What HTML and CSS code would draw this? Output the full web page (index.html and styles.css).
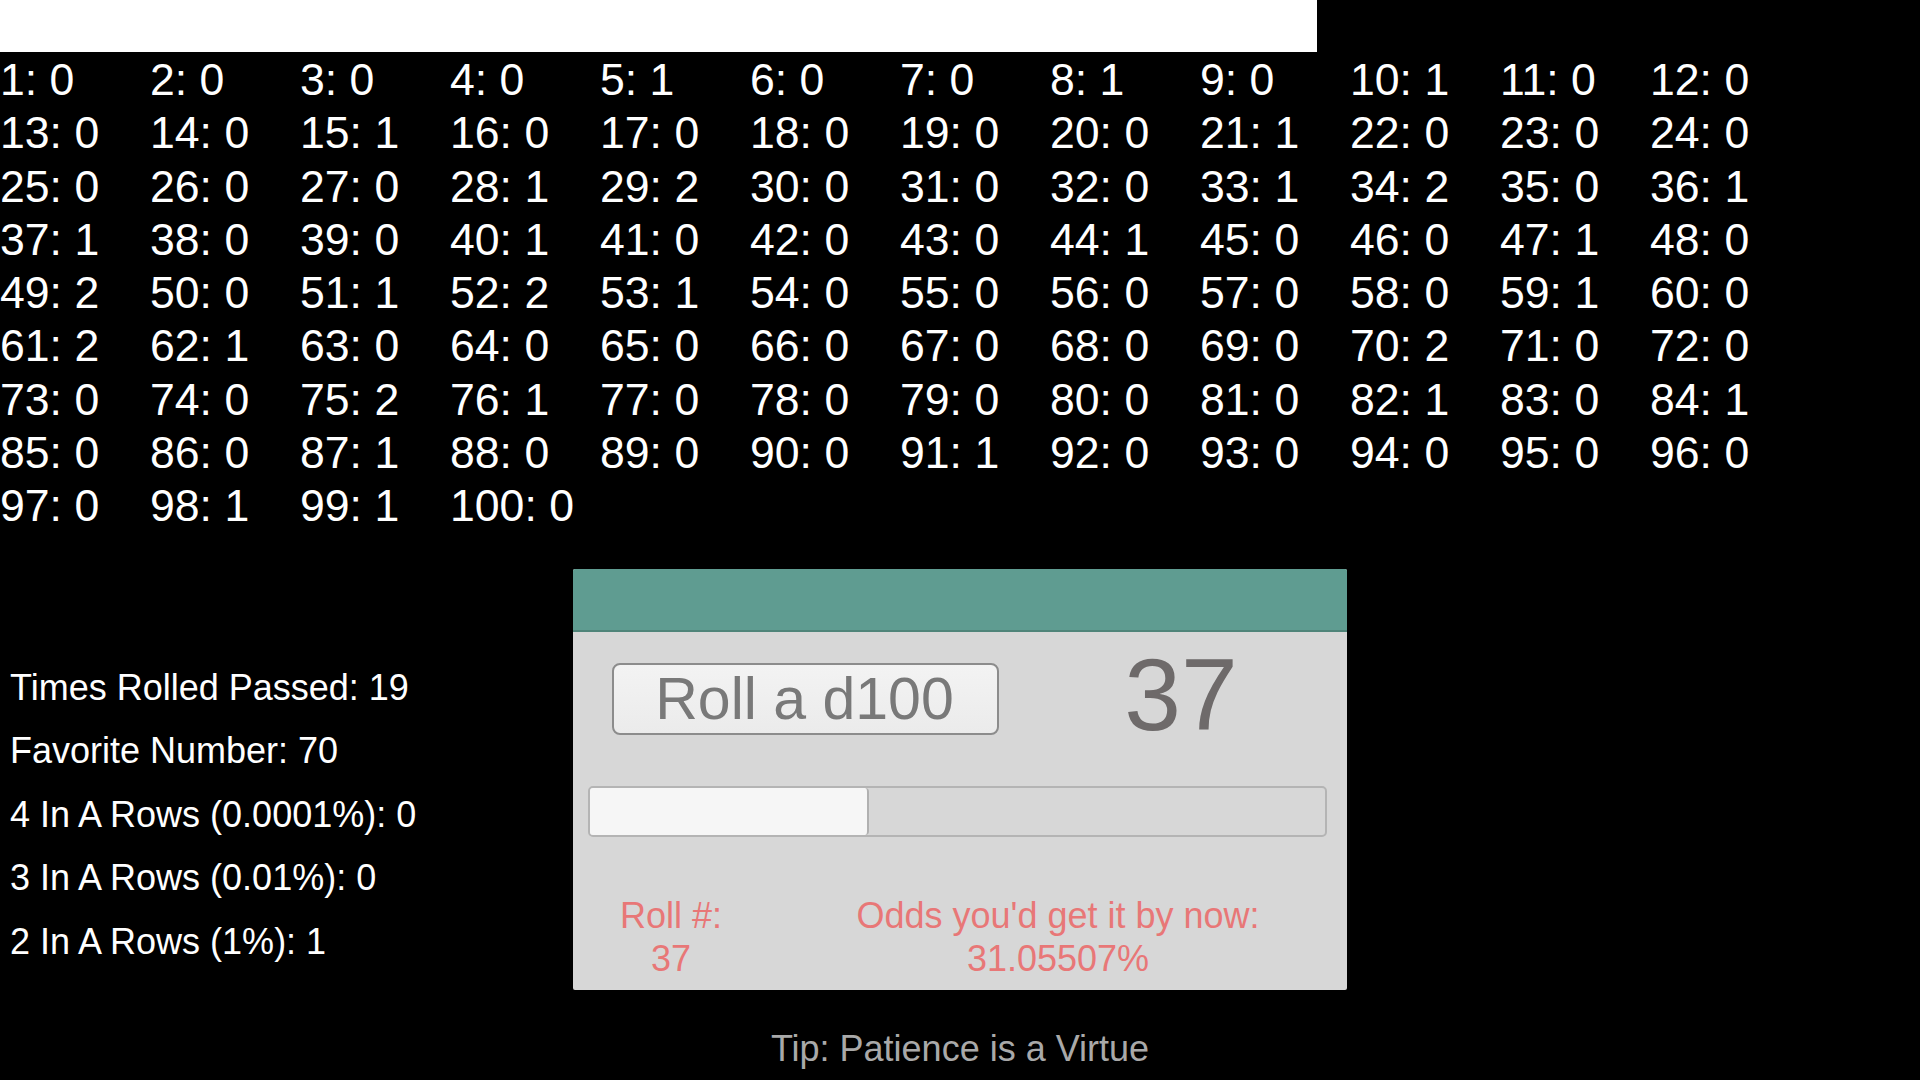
FILE: index.html
```html
<!DOCTYPE html>
<html>
<head>
<meta charset="utf-8">
<link rel="stylesheet" href="styles.css">
</head>
<body>
<div class="topbar"></div>
<div class="counts">
<span>1: 0</span><span>2: 0</span><span>3: 0</span><span>4: 0</span><span>5: 1</span><span>6: 0</span><span>7: 0</span><span>8: 1</span><span>9: 0</span><span>10: 1</span><span>11: 0</span><span>12: 0</span>
<span>13: 0</span><span>14: 0</span><span>15: 1</span><span>16: 0</span><span>17: 0</span><span>18: 0</span><span>19: 0</span><span>20: 0</span><span>21: 1</span><span>22: 0</span><span>23: 0</span><span>24: 0</span>
<span>25: 0</span><span>26: 0</span><span>27: 0</span><span>28: 1</span><span>29: 2</span><span>30: 0</span><span>31: 0</span><span>32: 0</span><span>33: 1</span><span>34: 2</span><span>35: 0</span><span>36: 1</span>
<span>37: 1</span><span>38: 0</span><span>39: 0</span><span>40: 1</span><span>41: 0</span><span>42: 0</span><span>43: 0</span><span>44: 1</span><span>45: 0</span><span>46: 0</span><span>47: 1</span><span>48: 0</span>
<span>49: 2</span><span>50: 0</span><span>51: 1</span><span>52: 2</span><span>53: 1</span><span>54: 0</span><span>55: 0</span><span>56: 0</span><span>57: 0</span><span>58: 0</span><span>59: 1</span><span>60: 0</span>
<span>61: 2</span><span>62: 1</span><span>63: 0</span><span>64: 0</span><span>65: 0</span><span>66: 0</span><span>67: 0</span><span>68: 0</span><span>69: 0</span><span>70: 2</span><span>71: 0</span><span>72: 0</span>
<span>73: 0</span><span>74: 0</span><span>75: 2</span><span>76: 1</span><span>77: 0</span><span>78: 0</span><span>79: 0</span><span>80: 0</span><span>81: 0</span><span>82: 1</span><span>83: 0</span><span>84: 1</span>
<span>85: 0</span><span>86: 0</span><span>87: 1</span><span>88: 0</span><span>89: 0</span><span>90: 0</span><span>91: 1</span><span>92: 0</span><span>93: 0</span><span>94: 0</span><span>95: 0</span><span>96: 0</span>
<span>97: 0</span><span>98: 1</span><span>99: 1</span><span>100: 0</span>
</div>
<div class="lower">
  <div class="stats">
    <div>Times Rolled Passed: 19</div>
    <div>Favorite Number: 70</div>
    <div>4 In A Rows (0.0001%): 0</div>
    <div>3 In A Rows (0.01%): 0</div>
    <div>2 In A Rows (1%): 1</div>
  </div>
  <div class="center">
    <div class="card">
      <div class="card-head"></div>
      <div class="card-body">
        <div class="roll-row">
          <button class="roll-btn">Roll a d100</button>
          <div class="result">37</div>
        </div>
        <div class="bar"><div class="bar-fill" style="width: 37.9%"></div></div>
        <div class="info">
          <div class="info-roll">Roll #:<br>37</div>
          <div class="info-odds">Odds you'd get it by now:<br>31.05507%</div>
        </div>
      </div>
    </div>
    <div class="tip">Tip: Patience is a Virtue</div>
  </div>
  <div class="spacer"></div>
</div>
</body>
</html>
```
FILE: styles.css
```css
html, body {
  margin: 0;
  padding: 0;
  background: #000;
  font-family: "Liberation Sans", Arial, sans-serif;
  color: #fff;
  width: 1920px;
  height: 1080px;
  overflow: hidden;
}
.topbar {
  width: 1317px;
  height: 52px;
  background: #fff;
}
.counts {
  display: grid;
  grid-template-columns: repeat(12, 150px);
  font-size: 44.6px;
  line-height: 53.3px;
  white-space: nowrap;
  padding-top: 1px;
}
.lower {
  display: grid;
  grid-template-columns: 573px 774px 1fr;
  margin-top: 36px;
}
.stats {
  padding-top: 87px;
  padding-left: 10px;
  font-size: 36px;
  line-height: 63.6px;
  white-space: nowrap;
}
.card {
  width: 774px;
  height: 421px;
  background: #d7d7d7;
  border-radius: 2px;
  overflow: hidden;
  display: flex;
  flex-direction: column;
}
.card-head {
  flex-shrink: 0;
  height: 61px;
  background: #5f9c91;
  border-bottom: 2px solid #4f8479;
}
.card-body {
  flex: 1;
  display: flex;
  flex-direction: column;
}
.roll-row {
  display: flex;
  align-items: flex-start;
  padding-top: 31px;
  padding-left: 39px;
  height: 72px;
}
.roll-btn {
  flex-shrink: 0;
  width: 387px;
  height: 72px;
  box-sizing: border-box;
  border: 2px solid #8c8c8c;
  border-radius: 8px;
  background: linear-gradient(#f3f3f3, #ebebeb);
  color: #797979;
  font-family: "Liberation Sans", Arial, sans-serif;
  font-size: 59px;
  line-height: 66px;
  padding: 0 2px 0 0;
  text-align: center;
}
.result {
  width: 220px;
  margin-left: 72px;
  height: 72px;
  text-align: center;
  font-size: 102px;
  line-height: 64px;
  color: #6e6a6a;
}
.bar {
  flex-shrink: 0;
  margin: 51px 20px 0 15px;
  height: 51px;
  box-sizing: border-box;
  border: 2px solid #b4b4b4;
  border-radius: 5px;
  background: #d7d7d7;
  overflow: hidden;
}
.bar-fill {
  height: 100%;
  background: #f6f6f6;
  border-right: 2px solid #b0b0b0;
  border-radius: 0 4px 4px 0;
  box-sizing: border-box;
}
.info {
  display: grid;
  grid-template-columns: 196px 1fr;
  margin-top: 57px;
  font-size: 36px;
  line-height: 43px;
  color: #e87777;
  text-align: center;
}
.tip {
  margin-top: 37px;
  text-align: center;
  font-size: 36px;
  line-height: 43px;
  color: #a9a9a9;
}
```
